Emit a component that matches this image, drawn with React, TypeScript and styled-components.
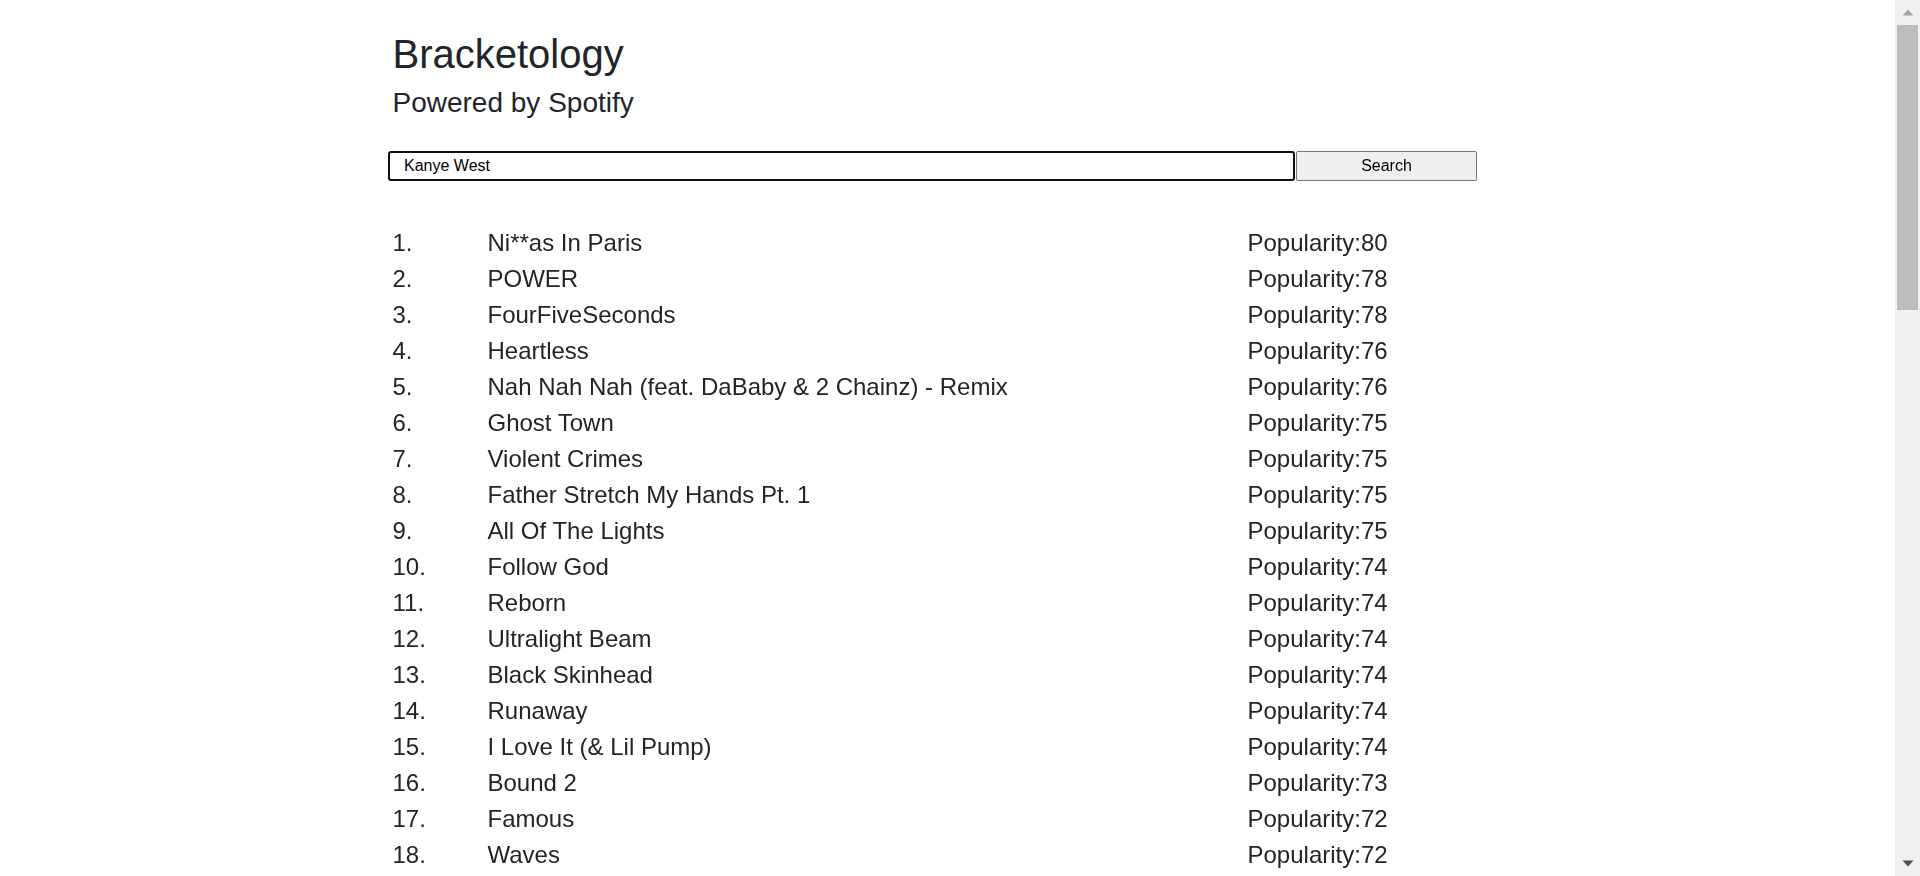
import React from "react";
import styled, { createGlobalStyle } from "styled-components";

const GlobalStyle = createGlobalStyle`
  html, body {
    margin: 0;
    height: 100%;
    overflow: hidden;
  }
  body {
    background: #ffffff;
    color: #212529;
    font-family: "Liberation Sans", Arial, sans-serif;
  }
`;

const Frame = styled.div`
  display: flex;
  height: 100vh;
`;

const Viewport = styled.div`
  flex: 1;
  min-width: 0;
  overflow-y: auto;
`;

const ScrollBar = styled.div`
  display: flex;
  flex-direction: column;
  width: 25px;
  flex: none;
  background: #f0f0f0;
`;

const ScrollButton = styled.div`
  display: flex;
  align-items: center;
  justify-content: center;
  height: 25px;
  flex: none;
`;

const ScrollTrack = styled.div`
  flex: 1;
  padding: 0 2px;
`;

const ScrollThumb = styled.div`
  height: 285px;
  background: #bcbcbc;
`;

const Arrow = ({ up, color }: { up?: boolean; color: string }) => (
  <svg width="12" height="7" viewBox="0 0 12 7">
    <polygon points={up ? "6,0.5 11.5,6.5 0.5,6.5" : "0.5,0.5 11.5,0.5 6,6.5"} fill={color} />
  </svg>
);

const Page = styled.main`
  box-sizing: border-box;
  width: 1140px;
  margin: 0 auto;
  padding: 30px 15px 10px;
`;

const Title = styled.h1`
  margin: 0 0 8px;
  font-size: 40px;
  line-height: 48px;
  font-weight: 400;
`;

const Subtitle = styled.h3`
  margin: 0;
  font-size: 28px;
  line-height: 33.6px;
  font-weight: 400;
`;

const SearchForm = styled.form`
  display: flex;
  align-items: stretch;
  gap: 1px;
  margin: 31.4px 0 0 -4.5px;
  height: 30px;
`;

const SearchInput = styled.input`
  box-sizing: border-box;
  width: 907px;
  height: 30px;
  padding: 0 0 0 14px;
  border: 2px solid #101010;
  border-radius: 3px;
  background: #ffffff;
  color: #000000;
  font-family: "Liberation Sans", Arial, sans-serif;
  font-size: 16px;
  outline: none;
  caret-color: #000000;
`;

const SearchButton = styled.button`
  box-sizing: border-box;
  width: 181px;
  height: 30px;
  padding: 0;
  border: 1px solid #767676;
  border-radius: 2px;
  background: #efefef;
  color: #000000;
  font-family: "Liberation Sans", Arial, sans-serif;
  font-size: 16px;
`;

const TrackList = styled.ol`
  list-style: none;
  margin: 44px 0 0;
  padding: 0;
`;

const TrackRow = styled.li`
  display: grid;
  grid-template-columns: 95px 760px 1fr;
  font-size: 24px;
  line-height: 36px;
  white-space: nowrap;
`;

const Cell = styled.span``;

const tracks: [string, number][] = [
  ["Ni**as In Paris", 80],
  ["POWER", 78],
  ["FourFiveSeconds", 78],
  ["Heartless", 76],
  ["Nah Nah Nah (feat. DaBaby & 2 Chainz) - Remix", 76],
  ["Ghost Town", 75],
  ["Violent Crimes", 75],
  ["Father Stretch My Hands Pt. 1", 75],
  ["All Of The Lights", 75],
  ["Follow God", 74],
  ["Reborn", 74],
  ["Ultralight Beam", 74],
  ["Black Skinhead", 74],
  ["Runaway", 74],
  ["I Love It (& Lil Pump)", 74],
  ["Bound 2", 73],
  ["Famous", 72],
  ["Waves", 72],
  ["Stronger", 72],
  ["Gold Digger", 72],
  ["Flashing Lights", 71],
  ["Can't Tell Me Nothing", 71],
  ["Good Life", 71],
  ["Monster", 71],
  ["Mercy", 70],
  ["Homecoming", 70],
  ["Through The Wire", 70],
  ["Jesus Walks", 70],
  ["Love Lockdown", 70],
  ["I Wonder", 69],
  ["Praise God", 69],
  ["Hurricane", 69],
  ["Off The Grid", 69],
  ["Wolves", 69],
  ["Real Friends", 68],
  ["No More Parties In LA", 68],
  ["Heard 'Em Say", 68],
  ["Touch The Sky", 68],
  ["All Falls Down", 68],
  ["Yikes", 67],
  ["Devil In A New Dress", 67],
  ["Gorgeous", 67],
  ["Blood On The Leaves", 67],
  ["New Slaves", 67],
  ["Jail", 66],
  ["Moon", 66],
  ["Champion", 66],
  ["Street Lights", 66],
  ["Say You Will", 66],
  ["Good Morning", 65],
  ["Everything I Am", 65],
  ["Slow Jamz", 65],
  ["Dark Fantasy", 65],
  ["Lost In The World", 65],
  ["Saint Pablo", 64],
  ["Fade", 64],
  ["Highlights", 64],
  ["Feedback", 64],
  ["I Thought About Killing You", 64],
  ["Wouldn't Leave", 63],
  ["Selah", 63],
  ["Closed On Sunday", 63],
  ["Welcome To Heartbreak", 63],
  ["Diamonds From Sierra Leone - Remix", 62],
];

export default function App() {
  return (
    <>
      <GlobalStyle />
      <Frame>
        <Viewport>
          <Page>
            <Title>Bracketology</Title>
            <Subtitle>Powered by Spotify</Subtitle>
            <SearchForm onSubmit={(e) => e.preventDefault()}>
              <SearchInput type="text" defaultValue="Kanye West" autoFocus />
              <SearchButton type="submit">Search</SearchButton>
            </SearchForm>
            <TrackList>
              {tracks.map(([name, popularity], i) => (
                <TrackRow key={name}>
                  <Cell>{i + 1}.</Cell>
                  <Cell>{name}</Cell>
                  <Cell>Popularity:{popularity}</Cell>
                </TrackRow>
              ))}
            </TrackList>
          </Page>
        </Viewport>
        <ScrollBar aria-hidden="true">
          <ScrollButton>
            <Arrow up color="#a3a3a3" />
          </ScrollButton>
          <ScrollTrack>
            <ScrollThumb />
          </ScrollTrack>
          <ScrollButton>
            <Arrow color="#505050" />
          </ScrollButton>
        </ScrollBar>
      </Frame>
    </>
  );
}
